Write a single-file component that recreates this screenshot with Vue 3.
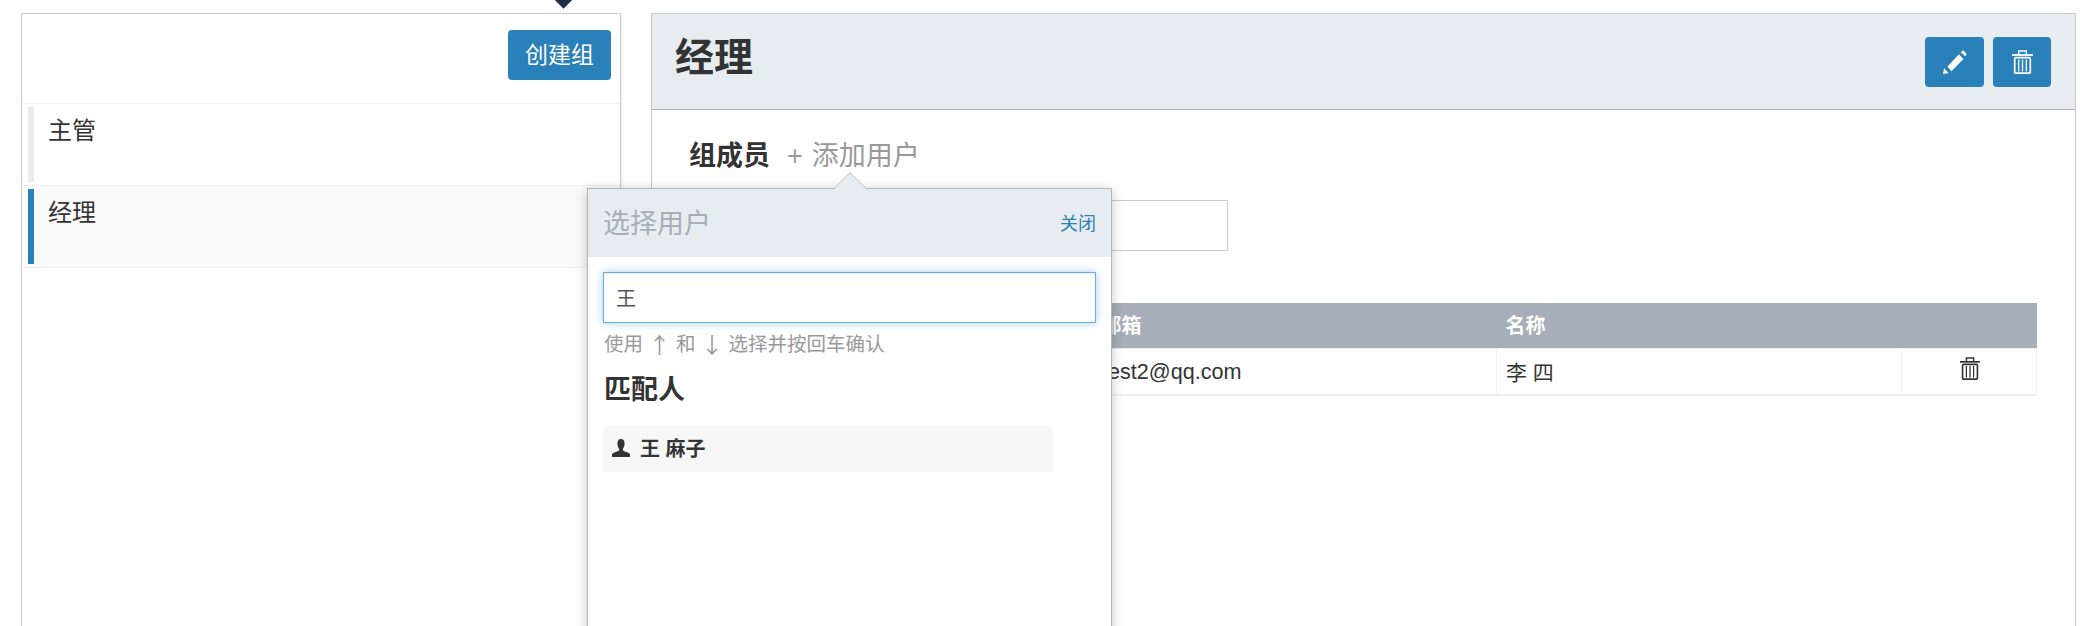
<script setup>
const groups = [
  { name: '主管', active: false },
  { name: '经理', active: true }
]
</script>

<template>
  <div class="page">
    <span class="diamond"></span>

    <aside class="side">
      <div class="side-head">
        <button class="btn create">创建组</button>
      </div>
      <div v-for="g in groups" :key="g.name" class="group" :class="{ active: g.active }">
        <div class="group-body">{{ g.name }}</div>
      </div>
    </aside>

    <main class="detail">
      <header class="detail-head">
        <h1>经理</h1>
        <div class="actions">
          <button class="btn icon-btn edit" aria-label="编辑">
            <svg viewBox="0 0 23 23" width="24" height="24" fill="#fff">
              <path d="M0 23l1-5.500 4.500 4.500z" />
              <path d="M4.300 15.700L15.300 4l4.400 4.700L8 20.300z" />
              <path d="M17 2.300L19.300.3l3.400 3.400L21.300 6z" />
            </svg>
          </button>
          <button class="btn icon-btn trash" aria-label="删除">
            <svg viewBox="0 0 21 24" width="21" height="24" fill="none" stroke="#fff" stroke-width="1.500">
              <path d="M0 5h21" stroke-width="1.800" />
              <path d="M6.700 4.500V1h7.600v3.500" />
              <rect x="2.700" y="7.700" width="15.600" height="15.500" rx="1" stroke-width="1.700" />
              <path d="M6.700 9.500v12M10.500 9.500v12M14.300 9.500v12" stroke-width="1.300" />
            </svg>
          </button>
        </div>
      </header>

      <section class="detail-body">
        <div class="tabs">
          <strong>组成员</strong>
          <span class="add"><span class="plus">+</span>添加用户</span>
        </div>
        <div class="filter"></div>
        <table class="members">
          <colgroup>
            <col class="c1" /><col class="c2" /><col class="c3" /><col />
          </colgroup>
          <thead>
            <tr><th></th><th>邮箱</th><th>名称</th><th></th></tr>
          </thead>
          <tbody>
            <tr>
              <td></td>
              <td class="email">test2@qq.com</td>
              <td class="person">李 四</td>
              <td class="row-action">
                <svg viewBox="0 0 21 24" width="20" height="23" fill="none" stroke="#333" stroke-width="1.500">
                  <path d="M0 5h21" stroke-width="1.800" />
                  <path d="M6.700 4.500V1h7.600v3.500" />
                  <rect x="2.700" y="7.700" width="15.600" height="15.500" rx="1" stroke-width="1.700" />
                  <path d="M6.700 9.500v12M10.500 9.500v12M14.300 9.500v12" stroke-width="1.300" />
                </svg>
              </td>
            </tr>
          </tbody>
        </table>
      </section>
    </main>

    <div class="popover">
      <svg class="arrow" viewBox="0 0 34 18" width="34" height="18">
        <path d="M0 17.500L17 .7l17 16.800" fill="#e7ecf0" stroke="#bbb" stroke-width="1" />
      </svg>
      <div class="pop-head">
        <span class="pop-title">选择用户</span>
        <a class="pop-close">关闭</a>
      </div>
      <div class="pop-body">
        <input class="search" value="王" />
        <p class="hint">使用<span class="key">↑</span>和<span class="key">↓</span>选择并按回车确认</p>
        <h3>匹配人</h3>
        <div class="match">
          <svg viewBox="0 0 20 20" width="18" height="18" fill="#333">
            <path d="M10 0c2.600 0 4 2.200 4 5 0 2.600-1 4.500-2 6 0 1.300.4 2 1.800 2.700 2.300 1 5.700 1.600 6.200 3.500V20H0v-2.800c.5-1.900 3.900-2.500 6.200-3.500C7.600 13 8 12.300 8 11 7 9.500 6 7.600 6 5c0-2.800 1.400-5 4-5z" />
          </svg>
          <span>王 麻子</span>
        </div>
      </div>
    </div>
  </div>
</template>

<style>
html, body { margin: 0; background: #fff; overflow: hidden; }
</style>

<style scoped>
.page {
  position: relative;
  display: flex;
  gap: 30px;
  align-items: stretch;
  box-sizing: border-box;
  height: 626px;
  padding: 13px 4px 0 21px;
  overflow: hidden;
  color: #333;
  font-family: "Liberation Sans", "Noto Sans CJK SC", sans-serif;
}
.diamond {
  position: absolute;
  left: 557px;
  top: -7px;
  width: 13px;
  height: 13px;
  background: #1f2d45;
  transform: rotate(45deg);
}
.side {
  box-sizing: border-box;
  width: 600px;
  margin-bottom: -4px;
  border: 1px solid #ccc;
  box-shadow: 1px 1px 3px rgba(0, 0, 0, .08);
}
.side-head {
  display: flex;
  justify-content: flex-end;
  align-items: flex-start;
  box-sizing: border-box;
  height: 90px;
  padding: 16px 9px 0 0;
  border-bottom: 1px solid #f2f2f2;
}
.btn {
  border: 0;
  border-radius: 4px;
  background: #2a80b9;
  color: #fff;
  font-family: inherit;
  padding: 0;
}
.create {
  width: 103px;
  height: 50px;
  padding-bottom: 4px;
  font-size: 23px;
}
.group {
  padding: 3px 0 3px 6px;
  border-bottom: 1px solid #f2f2f2;
}
.group.active { background: #fafafa; }
.group-body {
  box-sizing: border-box;
  height: 75px;
  padding: 7px 0 0 14px;
  border-left: 6px solid #e7ecf0;
  font-size: 24px;
  line-height: 34px;
}
.group.active .group-body { border-left-color: #2a80b9; }

.detail {
  flex: 1;
  min-width: 0;
  margin-bottom: -4px;
  border: 1px solid #ccc;
}
.detail-head {
  display: flex;
  justify-content: space-between;
  align-items: flex-start;
  box-sizing: border-box;
  height: 96px;
  padding: 23px 24px 0 23px;
  background: #e7ecf0;
  border-bottom: 1px solid #a5aeb9;
}
.detail-head h1 {
  margin: -2px 0 0;
  font-size: 39px;
  line-height: 46px;
  font-weight: 700;
}
.actions { display: flex; gap: 9px; }
.icon-btn {
  display: flex;
  align-items: center;
  justify-content: center;
  width: 59px;
  height: 50px;
}
.icon-btn.trash { width: 58px; }
.detail-body { padding: 0 38px 0 37px; }
.tabs {
  display: flex;
  align-items: center;
  height: 40px;
  margin-top: 26px;
  font-size: 27px;
  line-height: 40px;
}
.tabs strong { font-weight: 700; }
.add { color: #999; margin-left: 17px; }
.plus { margin-right: 9px; }
.filter {
  box-sizing: border-box;
  width: 539px;
  height: 51px;
  margin-top: 24px;
  border: 1px solid #ccc;
}
.members {
  width: 100%;
  margin-top: 52px;
  border-collapse: collapse;
  table-layout: fixed;
  font-size: 21px;
}
.c1 { width: 403px; }
.c2 { width: 404px; }
.c3 { width: 405px; }
.members th {
  height: 43px;
  padding: 0 9px 2px;
  background: #a5aeb9;
  color: #fff;
  font-size: 20px;
  font-weight: 700;
  text-align: left;
}
.members td {
  height: 45px;
  padding: 0 9px;
  border: 1px solid #f0f0f0;
  border-bottom: 2px solid #eee;
}
.members .email { font-size: 21.6px; }
.members .person { padding-bottom: 2px; height: 43px; }
.row-action { text-align: center; }
.row-action svg { display: inline-block; vertical-align: middle; margin: 0 0 6px 2px; }

.popover {
  position: absolute;
  left: 587px;
  top: 188px;
  box-sizing: border-box;
  width: 525px;
  height: 460px;
  background: #fff;
  border: 1px solid #b5b5b5;
  box-shadow: 0 2px 12px rgba(0, 0, 0, .22);
}
.arrow {
  position: absolute;
  left: 245px;
  top: -17px;
}
.pop-head {
  display: flex;
  justify-content: space-between;
  align-items: center;
  box-sizing: border-box;
  height: 68px;
  padding: 0 15px 3px 15px;
  background: #e7ecf0;
}
.pop-title {
  font-size: 27px;
  color: #a5aeb9;
}
.pop-close {
  font-size: 18px;
  color: #2a80b9;
}
.pop-body { padding: 15px 15px 0; }
.search {
  display: block;
  box-sizing: border-box;
  width: 100%;
  height: 51px;
  padding: 0 12px;
  border: 1px solid #66afe9;
  outline: 0;
  box-shadow: inset 0 1px 1px rgba(0, 0, 0, .075), 0 0 8px rgba(102, 175, 233, .6);
  color: #555;
  font-family: inherit;
  font-size: 20px;
}
.hint {
  margin: 9px 0 0 1px;
  color: #999;
  font-size: 19.5px;
  line-height: 24px;
  white-space: nowrap;
}
.key {
  display: inline-block;
  width: 33px;
  text-align: center;
  font-family: "Noto Sans CJK SC", sans-serif;
  font-size: 22px;
  line-height: 22px;
  vertical-align: top;
}
h3 {
  margin: 19px 0 0 1px;
  font-size: 27px;
  line-height: 30px;
  font-weight: 700;
}
.match {
  display: flex;
  align-items: center;
  gap: 10px;
  box-sizing: border-box;
  width: 450px;
  height: 47px;
  margin-top: 20px;
  padding: 0 0 2px 9px;
  background: #f7f7f7;
  font-size: 20px;
  font-weight: 600;
}
</style>
